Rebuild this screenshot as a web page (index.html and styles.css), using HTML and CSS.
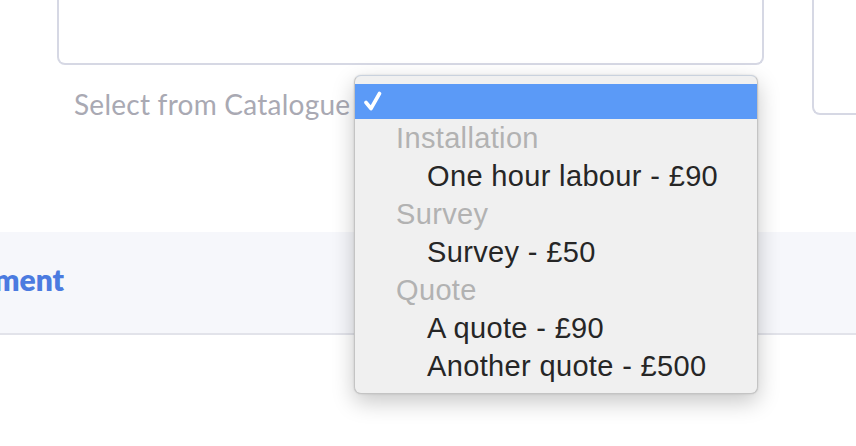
FILE: index.html
```html
<!DOCTYPE html>
<html>
<head>
<meta charset="utf-8">
<link rel="stylesheet" href="styles.css">
</head>
<body>
<div class="page">
  <div class="top">
    <div class="left-col">
      <div class="textarea"></div>
      <div class="catalogue-row">
        <span class="catalogue-label">Select from Catalogue</span>
      </div>
    </div>
    <div class="right-box"></div>
  </div>
  <div class="band">
    <span class="band-title">ment</span>
  </div>
</div>
<div class="dropdown">
  <div class="opt selected">
    <svg class="check" width="18" height="20" viewBox="0 0 18 20"><path d="M2 11.5 L7 17.5 L15.5 2.5" fill="none" stroke="#ffffff" stroke-width="3.6" stroke-linecap="round" stroke-linejoin="round"/></svg>
  </div>
  <div class="opt group">Installation</div>
  <div class="opt item">One hour labour - £90</div>
  <div class="opt group">Survey</div>
  <div class="opt item">Survey - £50</div>
  <div class="opt group">Quote</div>
  <div class="opt item">A quote - £90</div>
  <div class="opt item">Another quote - £500</div>
</div>
</body>
</html>
```
FILE: styles.css
```css
html, body {
  margin: 0;
  padding: 0;
  background: #ffffff;
  overflow: hidden;
  width: 856px;
  height: 446px;
}
.page {
  position: relative;
  width: 856px;
  height: 446px;
  font-family: "Lato", "Open Sans", sans-serif;
}
.top {
  display: flex;
  height: 232px;
}
.left-col {
  margin-left: 57px;
  width: 707px;
  display: flex;
  flex-direction: column;
}
.textarea {
  margin-top: -40px;
  height: 103px;
  border: 2px solid #d6d8e4;
  border-top: none;
  border-radius: 0 0 8px 8px;
}
.catalogue-row {
  padding-left: 17px;
  margin-top: 22px;
}
.catalogue-label {
  font-family: "Lato", sans-serif;
  font-size: 28px;
  color: #a9a9b3;
  line-height: 34px;
  letter-spacing: 0.25px;
}
.right-box {
  margin-left: 48px;
  flex: 1;
  margin-top: -20px;
  height: 133px;
  border: 2px solid #d6d8e4;
  border-right: none;
  border-top: none;
  border-radius: 0 0 0 8px;
}
.band {
  height: 101px;
  box-sizing: content-box;
  background: #f6f7fb;
  border-bottom: 2px solid #e2e3ea;
  display: flex;
  align-items: center;
  margin-left: -6px;
}
.band-title {
  font-family: "Lato", sans-serif;
  font-weight: 800;
  font-size: 30px;
  color: #4b7be0;
  line-height: 36px;
  margin-top: -7px;
}
.dropdown {
  position: absolute;
  left: 354px;
  top: 75px;
  width: 404px;
  height: 319px;
  box-sizing: border-box;
  padding-top: 8px;
  background: #f0f0f0;
  border-radius: 7px;
  border: 1px solid #c4c4c4;
  border-top-color: #c9d2de;
  box-shadow: 0 8px 22px rgba(0,0,0,0.22), 0 0 2px rgba(0,0,0,0.15);
  font-family: "Liberation Sans", Arial, sans-serif;
  font-size: 29px;
  letter-spacing: 0.35px;
  overflow: hidden;
}
.opt {
  height: 38px;
  line-height: 38px;
  white-space: nowrap;
}
.selected {
  height: 35px;
  background: #5b9af7;
  margin-left: -1px;
  margin-right: -1px;
  padding-left: 10px;
  display: flex;
  align-items: center;
}
.check {
  display: block;
  margin-top: -2px;
}
.group {
  color: #b2b2b2;
  padding-left: 41px;
}
.item {
  color: #262626;
  padding-left: 72px;
}
```
